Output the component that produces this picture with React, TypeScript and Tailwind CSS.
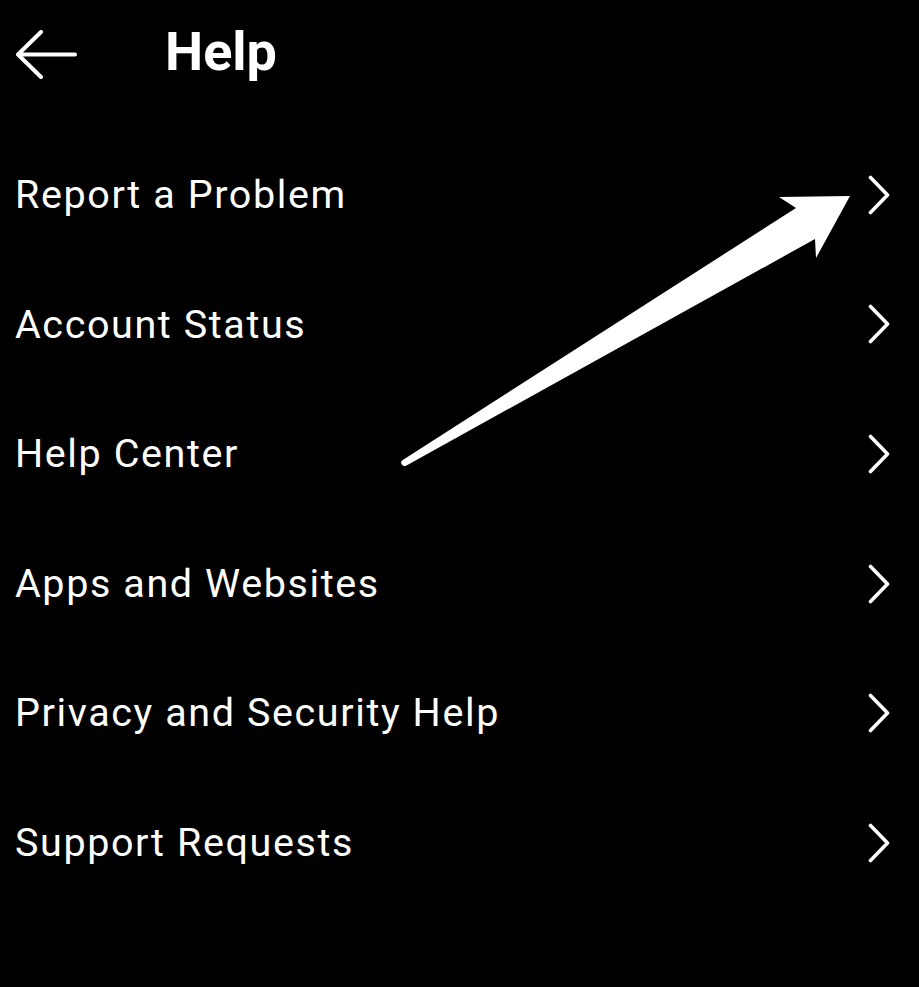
import React from "react";

const items = [
  "Report a Problem",
  "Account Status",
  "Help Center",
  "Apps and Websites",
  "Privacy and Security Help",
  "Support Requests",
];

function Chevron() {
  return (
    <svg width="24" height="40" viewBox="0 0 24 40" fill="none" className="shrink-0">
      <path d="M3.5 2.5 L20.5 20 L3.5 37.5" stroke="white" strokeWidth="3.6" strokeLinecap="round" strokeLinejoin="round" />
    </svg>
  );
}

export default function App() {
  return (
    <div className="relative w-[919px] h-[987px] bg-black text-white overflow-hidden" style={{ fontFamily: "Roboto, 'Noto Sans', sans-serif" }}>
      <div className="flex items-center h-[110px] pl-[15px]">
        <svg width="64" height="50" viewBox="0 0 64 50" fill="none" className="shrink-0">
          <path d="M60 24.5 H3 M26 2 L3 24.5 L26 47" stroke="white" strokeWidth="4" strokeLinecap="round" strokeLinejoin="round" />
        </svg>
        <h1 className="ml-[86px] text-[54px] font-bold leading-none -mt-[6px]">Help</h1>
      </div>
      <div className="pt-[20px]">
        {items.map((t) => (
          <div key={t} className="flex items-center justify-between h-[129.6px] pl-[15px] pr-[28px]">
            <span className="text-[39.5px] leading-none tracking-[1.6px]">{t}</span>
            <Chevron />
          </div>
        ))}
      </div>
      <svg className="absolute inset-0 pointer-events-none" width="919" height="987" viewBox="0 0 919 987">
        <path
          d="M402 460.5 L796 208 L779 197 L850 196 L816 258 L815 239 L406.5 465.5 Q403 467 401.5 464 Q400.5 462 402 460.5 Z"
          fill="white"
        />
      </svg>
    </div>
  );
}
